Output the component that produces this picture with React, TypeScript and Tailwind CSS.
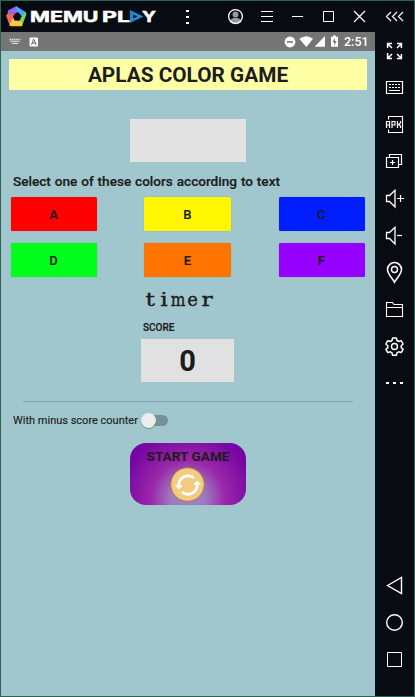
import type { ReactNode } from "react";

function Icon({ children, className = "" }: { children: ReactNode; className?: string }) {
  return (
    <svg
      viewBox="0 0 25 25"
      className={`block h-[25px] w-[25px] shrink-0 ${className}`}
      fill="none"
      stroke="#fff"
      strokeWidth="1"
    >
      {children}
    </svg>
  );
}

function Speaker() {
  return <path d="M4.5 9.500h3l5.500-5.200v16.600l-5.500-5.400h-3z" strokeWidth="1.300" />;
}

const gearPath =
  "M10.600 4h3.800l.6 2.500 1.700 1 2.500-.8 1.900 3.300-1.900 1.700v1.900l1.900 1.700-1.900 3.300-2.500-.8-1.700 1-.6 2.500h-3.800l-.6-2.500-1.700-1-2.500.8-1.900-3.300 1.900-1.700v-1.900l-1.900-1.700 1.900-3.300 2.500.8 1.700-1z";

const tools: ReactNode[] = [
  <path strokeWidth="1.500" d="M10 5.600H5.600V10M6 6l4 4M15 5.600h4.400V10M19 6l-4 4M5.600 15v5.400H10M6 20l4-4M19.400 16v4.400H15M19 20l-4-4" />,
  <>
    <path d="M4.500 6.500h16v12h-16zM7 15.500h11" strokeWidth="1.200" />
    <path d="M7 9.500h12M7 12.500h12" strokeDasharray="2 1" />
  </>,
  <>
    <path strokeWidth="1.100" d="M6.500 7.500v-3h14v16h-14v-3" />
    <path strokeWidth="1.200" d="M4.500 16V9.500h3V16M4.500 13h3M10 16V9.500h3v3.500H10M15.500 9v7M18.500 9v2l-2 1.500 2 1.500v2" />
  </>,
  <path strokeWidth="1.200" d="M4.500 8.500h12v10h-12zM7.500 8.500v-3h12v10h-3M10.500 11v5M8 13.500h5" />,
  <>
    <Speaker />
    <path strokeWidth="1.200" d="M15 12.500h7M18.500 9v7" />
  </>,
  <>
    <Speaker />
    <path strokeWidth="1.200" d="M15 12.500h5" />
  </>,
  <>
    <path strokeWidth="1.500" d="M12.500 22.300C10.500 18 5.500 14.500 5.500 9.600a7 7 0 0 1 14 0c0 4.900-5 8.400-7 12.700z" />
    <circle cx="12.500" cy="9.500" r="3" strokeWidth="1.400" />
  </>,
  <path strokeWidth="1.100" d="M4.500 19.500v-14h6l1.500 2h8.500v12zM4.500 10.500h16" />,
  <>
    <path strokeWidth="1.500" strokeLinejoin="round" d={gearPath} />
    <circle cx="12.500" cy="12.500" r="3" strokeWidth="1.400" />
  </>,
  <path strokeWidth="2" strokeDasharray="3 4" d="M4 12h17" />,
];

const navigation: ReactNode[] = [
  <path strokeWidth="1.400" d="M5.500 12.500l14-8v16z" />,
  <circle cx="12.500" cy="12.500" r="7.800" strokeWidth="1.400" />,
  <path d="M5.500 5.500h14v14h-14z" />,
];

function TitleBar() {
  return (
    <header className="flex h-[31px] shrink-0 items-center bg-[#080c12]">
      <svg viewBox="0 0 156 25" className="ml-[4px] h-[25px] w-[156px] shrink-0">
        <path fill="#8b6cf0" d="M11.500 2L3 6.500l-.5 3.500 8-.500 3.500-2z" />
        <path fill="#4ba6fa" d="M11 2l9.500 6 .5 3-3 3-3.500-4.500L11.500 7z" />
        <path fill="#f4655f" d="M3 9.500l-2 2L4.500 21l2.500.8 1.500-6.300-.500-2 2.500-4z" />
        <path fill="#f8c83e" d="M4.500 21.500l1.500.8h11l1-5-3.500-1.300H10l-1.500-2.500L5 19.500z" />
        <path fill="#72d65c" d="M17 22l4.500-12-1-2-4.500 5.500-1.500 3.500 2.500.500z" />
        <path fill="#080c12" d="M11.500 8.800l4.500 3.200-1.500 4.700-5-.200-1.500-4.500z" />
        <g
          fill="#fff"
          stroke="#fff"
          strokeWidth=".5"
          fontFamily="Inter, sans-serif"
          fontWeight="bold"
          fontSize="15"
        >
          <text x="25" y="17.800" textLength="68.500" lengthAdjust="spacingAndGlyphs">MEMU</text>
          <text x="97" y="17.800" textLength="28" lengthAdjust="spacingAndGlyphs">PL</text>
          <text x="137" y="17.800" textLength="14" lengthAdjust="spacingAndGlyphs">Y</text>
        </g>
        <path fill="#1e88d2" fillRule="evenodd" d="M125 6l13.500 6.500L125 19zM128.300 10.700v3.600l4-1.800z" />
      </svg>
      <Icon className="ml-[14px]">
        <path strokeWidth="3" strokeDasharray="2 4" d="M12.500 6v15" />
      </Icon>
      <Icon className="ml-[23px]">
        <circle cx="12.500" cy="10.500" r="3" fill="#999" stroke="none" />
        <path d="M6.500 17.500c1-5 11-5 12 0-3 3.500-9 3.500-12 0z" fill="#999" stroke="none" />
        <circle cx="12.500" cy="12.500" r="6.900" strokeWidth="1.300" />
      </Icon>
      <Icon className="ml-[7px]">
        <path d="M6 7.500h12M6 12.500h12M6 17.500h12" />
      </Icon>
      <Icon className="ml-[5px]">
        <path d="M7 12.500h11" />
      </Icon>
      <Icon className="ml-[6px]">
        <path d="M7.500 7.500h10v10h-10z" />
      </Icon>
      <Icon className="ml-[6px]">
        <path strokeWidth="1.200" d="M7 7l11 11M18 7L7 18" />
      </Icon>
      <Icon className="ml-[10px]">
        <path strokeWidth="1.200" d="M9 8l-4.500 4.500L9 17M15 8l-4.500 4.500L15 17M21 8l-4.500 4.500L21 17" />
      </Icon>
    </header>
  );
}

function StatusBar() {
  return (
    <div className="flex h-[19px] shrink-0 items-center bg-[#757575] text-white">
      <svg viewBox="0 0 30 12" className="ml-[8px] h-[12px] w-[30px]">
        <path d="M.5 3.500h11M1.500 5.500h9" stroke="#ddd" strokeWidth="1.300" strokeDasharray="1.500 .5" />
        <path d="M3 7.500h6" stroke="#ddd" />
        <rect x="20.500" y="1.500" width="8.500" height="9" rx="1" fill="#fff" />
        <path d="M22.500 9l2-5.500h.6l2 5.500M23.300 7h3" stroke="#666" fill="none" />
      </svg>
      <svg viewBox="0 0 56 14" className="ml-[245px] h-[14px] w-[56px]" fill="#fff">
        <circle cx="6" cy="7" r="5.400" />
        <path d="M3 6.200h6v1.600H3z" fill="#757575" />
        <path d="M15.300 3.800q7-5 13.700 0L22.300 12z" />
        <path d="M41 1V11.700H30.600z" />
        <path d="M47 1.700h2V.5h3v1.200h2V11.700h-7z" />
        <path d="M51 3l-2.500 4h1.700v3.500L52.700 6H51z" fill="#757575" />
      </svg>
      <span className="ml-[4px] pt-px text-[12.500px] leading-none font-medium">2:51</span>
    </div>
  );
}

const choices = [
  { label: "A", color: "bg-[#ff0000]" },
  { label: "B", color: "bg-[#fff700]" },
  { label: "C", color: "bg-[#001eff]" },
  { label: "D", color: "bg-[#00ff1a]" },
  { label: "E", color: "bg-[#ff7300]" },
  { label: "F", color: "bg-[#9500ff]" },
];

function Game() {
  return (
    <main className="flex flex-1 flex-col px-[8px] pt-[8px] text-[#1c1c1c]">
      <h1 className="flex h-[31px] items-center justify-center bg-[#ffffa6] text-[20.800px] leading-none font-bold whitespace-nowrap">
        <span className="pt-[2px]">APLAS COLOR GAME</span>
      </h1>
      <div className="mt-[29px] h-[43px] w-[116px] self-center bg-[#e1e1e1]" />
      <p className="mt-[11px] ml-[4px] text-[13.600px] leading-[16px] font-medium whitespace-nowrap [-webkit-text-stroke:0.200px_#1c1c1c]">
        <span className="inline-block w-[267px] text-justify [text-align-last:justify]">
          Select one of these colors according to text
        </span>
      </p>
      <div className="mx-[2px] mt-[8px] grid grid-cols-[86px_87px_86px] gap-y-[12px] [column-gap:47.400px]">
        {choices.map(({ label, color }) => (
          <button
            key={label}
            className={`h-[34px] rounded-[1.500px] pr-px text-[13px] leading-none font-medium shadow-[0_0_1px_rgba(0,0,0,0.350)] [-webkit-text-stroke:0.200px_#1c1c1c] ${color}`}
          >
            {label}
          </button>
        ))}
      </div>
      <p className="mt-[11px] ml-[134px] grid w-[71px] grid-cols-5 text-center font-['DejaVu_Serif',serif] text-[18px] leading-[24px] [-webkit-text-stroke:0.350px_#1c1c1c]">
        {"timer".split("").map((letter) => (
          <span key={letter} className={letter === "m" ? "-mx-[2px] scale-x-[0.860]" : letter === "e" ? "" : "scale-x-[1.300]"}>
            {letter}
          </span>
        ))}
      </p>
      <p className="mt-[10px] ml-[134px] text-[10px] leading-[12px] font-medium [-webkit-text-stroke:0.200px_#1c1c1c]">SCORE</p>
      <div className="mt-[5px] mr-px flex h-[43px] w-[93px] items-center justify-center self-center bg-[#e1e1e1] pt-[2px] text-[29px] leading-none font-bold">
        0
      </div>
      <hr className="mx-[14px] mt-[19px] h-px border-0 bg-[#82a3a7]" />
      <div className="mt-[10px] ml-[4px] flex h-[16px] items-center">
        <span className="w-[126px] text-[11px] leading-none whitespace-nowrap [-webkit-text-stroke:0.150px_#1c1c1c]">
          With minus score counter
        </span>
        <div className="ml-[3px] h-[11px] w-[26px] rounded-full bg-[#759397]">
          <div className="-mt-[2px] -ml-px h-[15px] w-[15px] rounded-full bg-[#ececec] shadow-[0_1px_1px_rgba(0,0,0,0.300)]" />
        </div>
      </div>
      <button className="mt-[15px] flex h-[62px] w-[116px] flex-col items-center self-center rounded-[16px] bg-[radial-gradient(circle_at_50%_88%,#9e83c2_0px,#9b7bc0_17px,#9b27a8_37px,#7606a3_66px)] pt-[5px]">
        <span className="text-[13.600px] leading-[16px] font-bold whitespace-nowrap">START GAME</span>
        <svg viewBox="0 0 36 36" className="mt-[3px] h-[36px] w-[36px] shrink-0">
          <circle cx="17.500" cy="17.500" r="16.800" fill="#f3cb80" stroke="#a97943" />
          <g fill="none" stroke="#fff" strokeWidth="2.800">
            <path d="M8.800 18.500A9.300 9.300 0 0 1 24 11" />
            <path d="M27.200 17.500A9.300 9.300 0 0 1 12 25" />
          </g>
          <path d="M4.800 18h8l-4 4.500zM23.200 18h8l-4-4.500z" fill="#fff" />
        </svg>
      </button>
    </main>
  );
}

export default function App() {
  return (
    <div className="flex h-[697px] w-[415px] flex-col overflow-hidden border border-[#2f6154] bg-[#080c12] font-[Roboto,sans-serif]">
      <TitleBar />
      <div className="flex min-h-0 flex-1">
        <div className="flex w-[374px] shrink-0 flex-col bg-[#a1c7ce]">
          <StatusBar />
          <Game />
        </div>
        <aside className="flex flex-1 flex-col justify-between bg-[#080c12] pb-[18px]">
          <div>
            {tools.map((tool, index) => (
              <div key={index} className="flex h-[37px] items-center justify-center">
                <Icon>{tool}</Icon>
              </div>
            ))}
          </div>
          <div>
            {navigation.map((item, index) => (
              <div key={index} className="flex h-[37px] items-center justify-center">
                <Icon>{item}</Icon>
              </div>
            ))}
          </div>
        </aside>
      </div>
    </div>
  );
}
